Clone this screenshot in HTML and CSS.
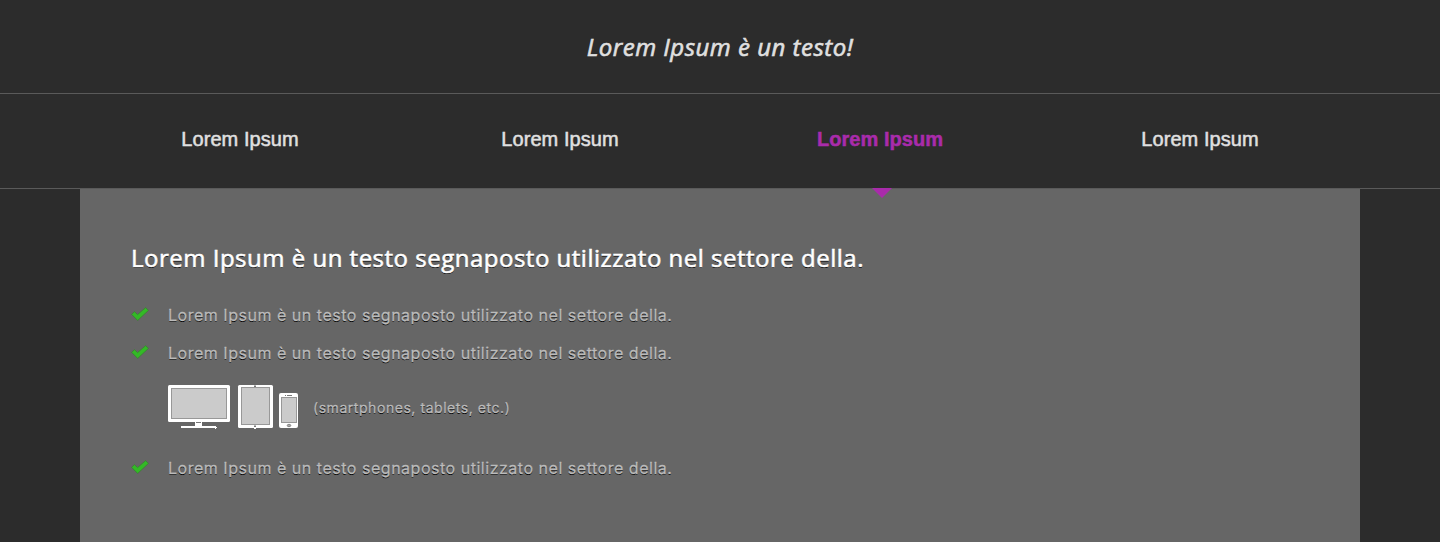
FILE: index.html
```html
<!DOCTYPE html>
<html lang="it">
<head>
<meta charset="utf-8">
<title>Lorem Ipsum</title>
<link rel="stylesheet" href="styles.css">
</head>
<body>
<svg class="sprites" width="0" height="0" aria-hidden="true">
  <defs>
    <symbol id="check" viewBox="0 0 18 14">
      <path d="M.6 7.400 3.400 4.600 6.600 7.500 14.600.6 17.500 3.400 6.600 13.500Z" fill="#33b926" stroke="#3f7a39" stroke-width=".8"/>
    </symbol>
  </defs>
</svg>
<header class="tagline"><h1>Lorem Ipsum è un testo!</h1></header>
<nav class="tabs">
  <div class="tabs-inner">
    <a class="tab">Lorem Ipsum</a>
    <a class="tab">Lorem Ipsum</a>
    <a class="tab active">Lorem Ipsum</a>
    <a class="tab">Lorem Ipsum</a>
  </div>
</nav>
<main class="panel">
  <h2>Lorem Ipsum è un testo segnaposto utilizzato nel settore della.</h2>
  <ul class="features">
    <li><svg class="check"><use href="#check"/></svg><span>Lorem Ipsum è un testo segnaposto utilizzato nel settore della.</span></li>
    <li><svg class="check"><use href="#check"/></svg><span>Lorem Ipsum è un testo segnaposto utilizzato nel settore della.</span></li>
    <li class="devices">
      <svg width="131" height="44" viewBox="0 0 131 44">
        <g fill="#fff">
          <rect width="62" height="37" rx="1.5"/>
          <path d="M27 37h7v4h14v1h1v1h-1v1h-1v-1H13v-2h14z"/>
          <rect x="70" width="35" height="43" rx="1.5"/>
          <rect x="111" y="8" width="19" height="35" rx="2"/>
        </g>
        <g fill="#cbcbcb" stroke="#989898">
          <rect x="3.500" y="3.500" width="55" height="30"/>
          <rect x="73.500" y="2.500" width="28" height="37"/>
          <rect x="113.500" y="12.500" width="15" height="25"/>
        </g>
        <path d="M28 37.500h5" stroke="#777"/>
        <path d="M86 .5h2v1.500h-2zM86 40.500h2v1.500h-2zM117 10h1v1h-1zM119 10h5v1h-5z" fill="#777"/>
        <path d="M86 43h2v1h-2z" fill="#fff"/>
        <ellipse cx="121" cy="40.500" rx="1.800" ry="1.200" fill="#aaa" stroke="#777" stroke-width=".8"/>
      </svg>
      <small>(smartphones, tablets, etc.)</small>
    </li>
    <li><svg class="check"><use href="#check"/></svg><span>Lorem Ipsum è un testo segnaposto utilizzato nel settore della.</span></li>
  </ul>
</main>
</body>
</html>
```

FILE: styles.css
```css
* { box-sizing: border-box; }
body {
  margin: 0;
  height: 542px;
  display: flex;
  flex-direction: column;
  overflow: hidden;
  background: #2c2c2c;
  color: #e0e0e0;
  font-family: "Liberation Sans", Arial, sans-serif;
}
.sprites { position: absolute; }
h1, h2, ul { margin: 0; padding: 0; font-weight: 400; }
.tagline {
  height: 94px;
  border-bottom: 1px solid #5a5a5a;
  text-align: center;
}
.tagline h1 {
  font: italic 400 24px/94px "Open Sans", sans-serif;
  letter-spacing: .5px;
  -webkit-text-stroke: .6px currentColor;
}
.tabs { height: 95px; border-bottom: 1px solid #5a5a5a; }
.tabs-inner {
  width: 1280px;
  height: 94px;
  margin: 0 auto;
  display: grid;
  grid-template-columns: repeat(4, 1fr);
}
.tab {
  position: relative;
  text-align: center;
  font-size: 20px;
  line-height: 90px;
  letter-spacing: .05px;
  -webkit-text-stroke: .5px currentColor;
}
.tab.active { color: #a92bab; font-weight: 700; }
.tab.active::after {
  content: "";
  position: absolute;
  left: 152px;
  top: 94px;
  border: solid transparent;
  border-width: 10px 10px 0;
  border-top-color: #a92bab;
}
.panel {
  width: 1280px;
  margin: 0 auto;
  flex: 1;
  padding: 50px 51px 0;
  background: #666;
}
.panel h2 {
  color: #fff;
  font: 400 24px/38px "Open Sans", sans-serif;
  letter-spacing: .5px;
  -webkit-text-stroke: .6px currentColor;
  text-shadow: 0 1px 0 #000;
  white-space: nowrap;
}
.features {
  list-style: none;
  padding-top: 19px;
  color: #bbb;
  text-shadow: 0 1px 0 #000;
}
.features li {
  display: flex;
  height: 38px;
  align-items: center;
  font: 16px/38px Inter, sans-serif;
  letter-spacing: .52px;
  -webkit-text-stroke: .3px currentColor;
}
.check { width: 18px; height: 14px; margin: 0 19px 3px 0; }
.features .devices { height: 77px; padding: 0 0 7px 37px; }
.devices svg { margin-right: 14px; }
.devices small { font-size: 14px; letter-spacing: .55px; padding-top: 2px; }
```
